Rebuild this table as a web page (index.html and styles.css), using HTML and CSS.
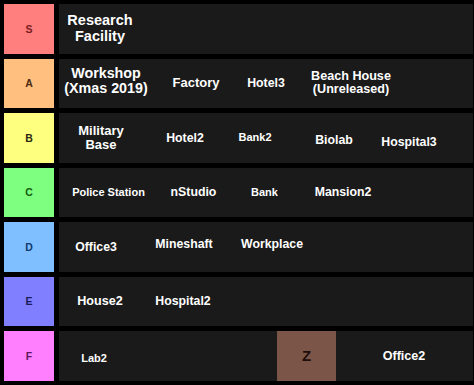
FILE: index.html
```html
<!DOCTYPE html>
<html lang="en">
<head>
  <meta charset="utf-8">
  <meta name="viewport" content="width=device-width, initial-scale=1">
  <title>Map Tier List</title>
  <link rel="stylesheet" href="styles.css">
</head>
<body>

<div class="tiers">

  <div class="tier">
    <div class="label s">S</div>
    <div class="items">
      <div class="tile xl research">Research<br>Facility</div>
    </div>
  </div>

  <div class="tier">
    <div class="label a">A</div>
    <div class="items">
      <div class="tile lg workshop">Workshop<br>(Xmas 2019)</div>
      <div class="tile md factory">Factory</div>
      <div class="tile hotel3">Hotel3</div>
      <div class="tile mid beach">Beach House<br>(Unreleased)</div>
    </div>
  </div>

  <div class="tier">
    <div class="label b">B</div>
    <div class="items">
      <div class="tile md military">Military<br>Base</div>
      <div class="tile hotel2">Hotel2</div>
      <div class="tile sm bank2">Bank2</div>
      <div class="tile low biolab">Biolab</div>
      <div class="tile lower hospital3">Hospital3</div>
    </div>
  </div>

  <div class="tier">
    <div class="label c">C</div>
    <div class="items">
      <div class="tile sm police">Police Station</div>
      <div class="tile nstudio">nStudio</div>
      <div class="tile sm bank">Bank</div>
      <div class="tile mansion2">Mansion2</div>
    </div>
  </div>

  <div class="tier">
    <div class="label d">D</div>
    <div class="items">
      <div class="tile office3">Office3</div>
      <div class="tile high mineshaft">Mineshaft</div>
      <div class="tile high workplace">Workplace</div>
    </div>
  </div>

  <div class="tier">
    <div class="label e">E</div>
    <div class="items">
      <div class="tile mid house2">House2</div>
      <div class="tile hospital2">Hospital2</div>
    </div>
  </div>

  <div class="tier">
    <div class="label f">F</div>
    <div class="items">
      <div class="tile sm low lab2">Lab2</div>
      <div class="tile blank"></div>
      <div class="tile z">Z</div>
      <div class="tile mid office2">Office2</div>
    </div>
  </div>

</div>

</body>
</html>
```

FILE: styles.css
```css
body {margin: 0; background: #000; font-family: "Liberation Sans", Arial, sans-serif; font-weight: bold;}
.tiers {display: flex; flex-direction: column; gap: 5px; padding: 4px 1px 4px 4px; width: 469px;}
.tier {display: flex; gap: 5px; height: 49.5px;}

.label {width: 50px; flex: none; display: flex; align-items: center; justify-content: center; font-size: 10.5px;}
.label.s {background: #ff7f7f; color: #7a1c22;}
.label.a {background: #ffbf7f; color: #4a2a10;}
.label.b {background: #ffff7f; color: #2a2a10;}
.label.c {background: #7fff7f; color: #105a10;}
.label.d {background: #7fbfff; color: #123a6a;}
.label.e {background: #7f7fff; color: #1a1a5a;}
.label.f {background: #ff7fff; color: #5a1a5a;}

.items {flex: 1; display: flex; background: #1a1a1a;}

.tile {flex: none; display: flex; align-items: center; justify-content: center; text-align: center; white-space: nowrap; color: #fff; font-size: 12.3px; line-height: 1.15;}
.tile.sm {font-size: 11px;}
.tile.mid {font-size: 12.6px;}
.tile.md {font-size: 13px; line-height: 14px;}
.tile.lg {font-size: 14.3px; line-height: 15.5px; padding-bottom: 4px;}
.tile.xl {font-size: 14.5px; line-height: 15.5px;}
.tile.mid.beach {line-height: 12.8px;}
.tile.low {padding-top: 5px;}
.tile.lower {padding-top: 9px;}
.tile.high {padding-bottom: 5px;}

.research {width: 82px;}
.workshop {width: 94px;}
.factory {width: 86px;}
.hotel3 {width: 54px;}
.beach {width: 116px;}
.military {width: 84px;}
.hotel2 {width: 84px;}
.bank2 {width: 56px;}
.biolab {width: 102px;}
.hospital3 {width: 48px;}
.police {width: 99px;}
.nstudio {width: 71px;}
.bank {width: 71px;}
.mansion2 {width: 86px;}
.office3 {width: 74px;}
.mineshaft {width: 102px;}
.workplace {width: 74px;}
.house2 {width: 82px;}
.hospital2 {width: 84px;}
.lab2 {width: 70px;}
.blank {width: 148px;}
.z {width: 59px; background: #7b5648; color: #1e0f0a; font-size: 15px;}
.office2 {width: 136px;}
```
